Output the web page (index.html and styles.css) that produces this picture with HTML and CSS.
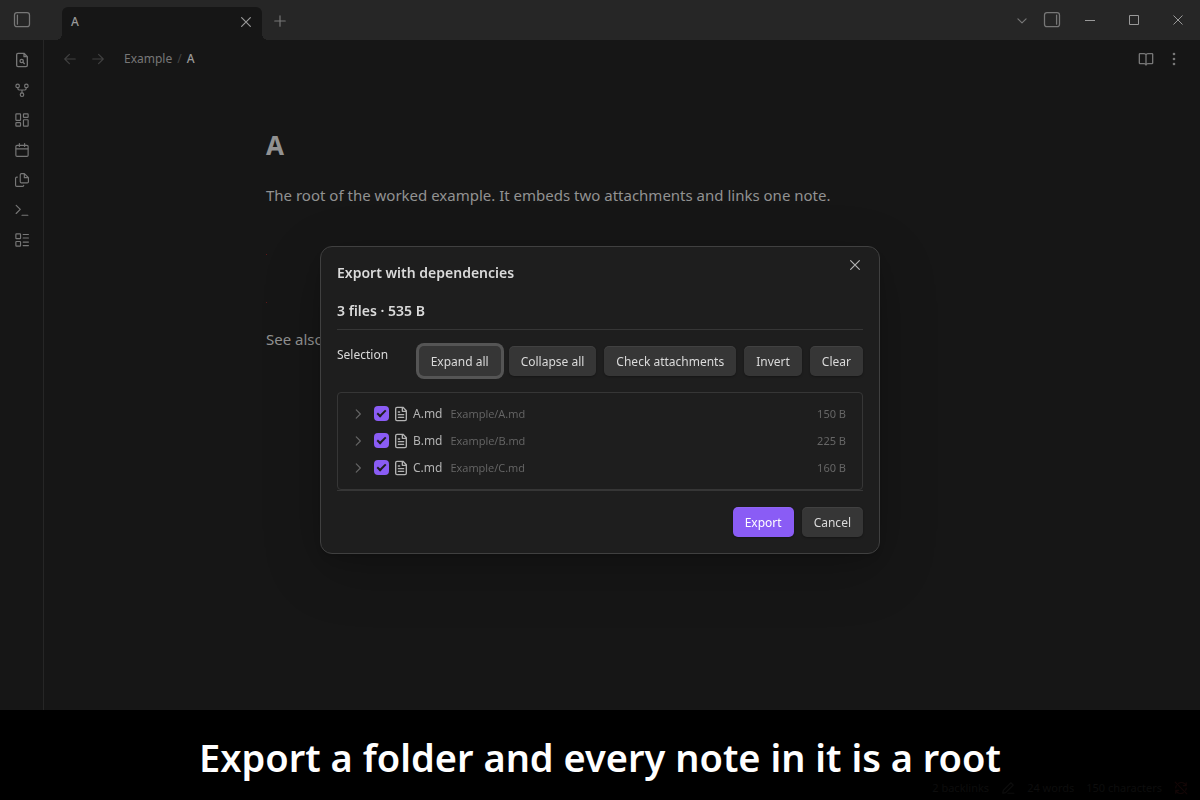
FILE: index.html
```html
<!DOCTYPE html>
<html lang="en">
<head>
<meta charset="utf-8">
<title>A - Export with dependencies</title>
<link rel="stylesheet" href="styles.css">
</head>
<body>
<div class="app">
  <header class="titlebar">
    <button class="icon-btn sidebar-toggle" aria-label="Toggle left sidebar"><svg class="icon icon-l" viewBox="0 0 24 24"><rect x="3" y="3" width="18" height="17" rx="3"/><path d="M6.500 6v11"/></svg></button>
    <div class="tab">
      <span class="tab-title">A</span>
      <button class="icon-btn tab-close" aria-label="Close tab"><svg class="icon" viewBox="0 0 24 24"><path d="M4.500 4.500l15 15M19.500 4.500l-15 15"/></svg></button>
    </div>
    <button class="icon-btn new-tab" aria-label="New tab"><svg class="icon" viewBox="0 0 24 24"><path d="M12 3v18M3 12h18"/></svg></button>
    <div class="window-controls">
      <button class="icon-btn tab-list" aria-label="Tab list"><svg class="icon" viewBox="0 0 24 24"><path d="M5 10l7 7 7-7"/></svg></button>
      <button class="icon-btn right-toggle" aria-label="Toggle right sidebar"><svg class="icon icon-l" viewBox="0 0 24 24"><rect x="3" y="3" width="18" height="17" rx="3"/><path d="M17.500 6v11"/></svg></button>
      <button class="icon-btn win" aria-label="Minimize"><svg class="glyph" viewBox="0 0 10 10"><path d="M0 5.500h10"/></svg></button>
      <button class="icon-btn win" aria-label="Maximize"><svg class="glyph" viewBox="0 0 10 10"><path d="M.5.5h9v9h-9z"/></svg></button>
      <button class="icon-btn win" aria-label="Close"><svg class="glyph" viewBox="0 0 10 10"><path d="M.5.5l9 9M9.500.5l-9 9"/></svg></button>
    </div>
  </header>
  <div class="workspace">
    <nav class="ribbon" aria-label="Ribbon">
      <button class="icon-btn" aria-label="Quick switcher"><svg class="icon icon-m" viewBox="0 0 24 24"><path d="M15 2H6a2 2 0 0 0-2 2v16a2 2 0 0 0 2 2h12a2 2 0 0 0 2-2V7l-5-5zM15 2v5h5"/><circle cx="11.500" cy="13.500" r="2.500"/><path d="M13.500 15.500L15.500 17.500"/></svg></button>
      <button class="icon-btn" aria-label="Graph view"><svg class="icon" viewBox="0 0 24 24"><circle cx="12" cy="20" r="3"/><circle cx="4.500" cy="5" r="3"/><circle cx="19.500" cy="5" r="3"/><path d="M19 8v2a2 2 0 0 1-2 2H7a2 2 0 0 1-2-2V8M12 12v5"/></svg></button>
      <button class="icon-btn" aria-label="Canvas"><svg class="icon" viewBox="0 0 24 24"><rect x="1.500" y="1.500" width="8" height="11" rx="1"/><rect x="14.500" y="1.500" width="8" height="6" rx="1"/><rect x="14.500" y="11.500" width="8" height="11" rx="1"/><rect x="1.500" y="16.500" width="8" height="6" rx="1"/></svg></button>
      <button class="icon-btn" aria-label="Daily note"><svg class="icon" viewBox="0 0 24 24"><rect x="1.500" y="4" width="21" height="19" rx="2"/><path d="M7.500 1v5M16.500 1v5M2 10h20"/></svg></button>
      <button class="icon-btn" aria-label="Templates"><svg class="icon" viewBox="0 0 24 24"><path d="M16 1h-5a2 2 0 0 0-2 2v12a2 2 0 0 0 2 2h10a2 2 0 0 0 2-2V8l-7-7zM16 1v7h7"/><path d="M4 7H3a2 2 0 0 0-2 2v12a2 2 0 0 0 2 2h10a2 2 0 0 0 2-2v0"/></svg></button>
      <button class="icon-btn" aria-label="Command palette"><svg class="icon" viewBox="0 0 24 24"><path d="M2 18l7-7-7-7M12 21h10"/></svg></button>
      <button class="icon-btn" aria-label="Bases"><svg class="icon" viewBox="0 0 24 24"><rect x="1.500" y="1.500" width="8" height="8" rx="1"/><rect x="1.500" y="14.500" width="8" height="8" rx="1"/><path d="M14 2.500h9M14 8.500h9M14 15.500h9M14 21.500h9"/></svg></button>
    </nav>
    <main class="view">
      <div class="view-header">
        <button class="icon-btn nav-arrow" aria-label="Back"><svg class="icon" viewBox="0 0 24 24"><path d="M21 12H4M11 4l-8 8 8 8"/></svg></button>
        <button class="icon-btn nav-arrow" aria-label="Forward"><svg class="icon" viewBox="0 0 24 24"><path d="M3 12h17M13 4l8 8-8 8"/></svg></button>
        <div class="crumbs"><a class="crumb" href="#example">Example</a><span class="slash">/</span><span class="current">A</span></div>
        <button class="icon-btn view-action" aria-label="Reading view"><svg class="icon icon-m" viewBox="0 0 24 24"><path d="M12 6a3 3 0 0 0-3-2H3a1 1 0 0 0-1 1v13a1 1 0 0 0 1 1h6a3 3 0 0 1 3 2 3 3 0 0 1 3-2h6a1 1 0 0 0 1-1V5a1 1 0 0 0-1-1h-6a3 3 0 0 0-3 2zM12 6v15"/></svg></button>
        <button class="icon-btn view-action" aria-label="More options"><svg class="icon icon-m dots" viewBox="0 0 24 24"><circle cx="12" cy="4.500" r="2"/><circle cx="12" cy="12" r="2"/><circle cx="12" cy="19.500" r="2"/></svg></button>
      </div>
      <article class="note">
        <h1 class="note-title">A</h1>
        <p class="note-text">The root of the worked example. It embeds two attachments and links one note.</p>
        <div class="embed"></div>
        <div class="embed"></div>
        <p class="note-text">See also</p>
      </article>
    </main>
  </div>
  <footer class="caption">
    <p class="caption-text">Export a folder and every note in it is a root</p>
    <div class="status">
      <span>2 backlinks</span>
      <svg class="icon" viewBox="0 0 24 24"><path d="M12 21h10M3 21l1-5L17 3l4 4L8 20z"/></svg>
      <span>24 words</span>
      <span>150 characters</span>
      <svg class="icon sync" viewBox="0 0 24 24"><path d="M2 2l20 20M21 8a9 9 0 0 0-13-4M21 3v5h-5M3 16a9 9 0 0 0 13 4M3 21v-5h5M4 8a9 9 0 0 0-1 4M20 16a9 9 0 0 0 1-4"/></svg>
    </div>
  </footer>
</div>

<div class="modal-layer">
  <section class="modal" role="dialog" aria-labelledby="dialog-title">
    <button class="icon-btn modal-close" aria-label="Close dialog"><svg class="icon" viewBox="0 0 24 24"><path d="M4.500 4.500l15 15M19.500 4.500l-15 15"/></svg></button>
    <h2 class="modal-title" id="dialog-title">Export with dependencies</h2>
    <p class="summary">3 files · 535 B</p>
    <div class="selection">
      <span class="selection-label">Selection</span>
      <div class="selection-actions">
        <button class="btn focused">Expand all</button>
        <button class="btn">Collapse all</button>
        <button class="btn">Check attachments</button>
        <button class="btn">Invert</button>
        <button class="btn">Clear</button>
      </div>
    </div>
    <div class="tree-wrap">
      <ul class="tree">
        <li class="row">
          <button class="icon-btn chevron" aria-label="Expand A.md"><svg class="icon" viewBox="0 0 24 24"><path d="M9 5l7 7-7 7"/></svg></button>
          <input class="check" type="checkbox" id="file-a" checked>
          <label class="file" for="file-a"><svg class="icon icon-m" viewBox="0 0 24 24"><path d="M15 2H6a2 2 0 0 0-2 2v16a2 2 0 0 0 2 2h12a2 2 0 0 0 2-2V7l-5-5zM14 2v6h6M8 9h2M8 13h8M8 17h8"/></svg><span class="name">A.md</span><span class="path">Example/A.md</span></label>
          <span class="size">150 B</span>
        </li>
        <li class="row">
          <button class="icon-btn chevron" aria-label="Expand B.md"><svg class="icon" viewBox="0 0 24 24"><path d="M9 5l7 7-7 7"/></svg></button>
          <input class="check" type="checkbox" id="file-b" checked>
          <label class="file" for="file-b"><svg class="icon icon-m" viewBox="0 0 24 24"><path d="M15 2H6a2 2 0 0 0-2 2v16a2 2 0 0 0 2 2h12a2 2 0 0 0 2-2V7l-5-5zM14 2v6h6M8 9h2M8 13h8M8 17h8"/></svg><span class="name">B.md</span><span class="path">Example/B.md</span></label>
          <span class="size">225 B</span>
        </li>
        <li class="row">
          <button class="icon-btn chevron" aria-label="Expand C.md"><svg class="icon" viewBox="0 0 24 24"><path d="M9 5l7 7-7 7"/></svg></button>
          <input class="check" type="checkbox" id="file-c" checked>
          <label class="file" for="file-c"><svg class="icon icon-m" viewBox="0 0 24 24"><path d="M15 2H6a2 2 0 0 0-2 2v16a2 2 0 0 0 2 2h12a2 2 0 0 0 2-2V7l-5-5zM14 2v6h6M8 9h2M8 13h8M8 17h8"/></svg><span class="name">C.md</span><span class="path">Example/C.md</span></label>
          <span class="size">160 B</span>
        </li>
      </ul>
    </div>
    <div class="modal-actions">
      <button class="btn primary">Export</button>
      <button class="btn">Cancel</button>
    </div>
  </section>
</div>
</body>
</html>
```

FILE: styles.css
```css
*, *::before, *::after { box-sizing: border-box; }
body {
  margin: 0;
  background: #161616;
  color: #dadada;
  font-family: "Noto Sans", "Open Sans", sans-serif;
  font-size: 12px;
  line-height: 20px;
}
h1, h2, p, ul { margin: 0; padding: 0; }
.app { display: flex; flex-direction: column; height: 100vh; overflow: hidden; }

.icon-btn {
  display: flex;
  align-items: center;
  justify-content: center;
  flex: none;
  width: 28px;
  height: 28px;
  padding: 0;
  border: 0;
  background: none;
  color: #777;
}
.icon, .glyph { width: 14px; height: 14px; fill: none; stroke: currentColor; stroke-width: 2; stroke-linecap: round; stroke-linejoin: round; flex: none; }
.icon-m { width: 16px; height: 16px; }
.icon-l { width: 20px; height: 20px; stroke-width: 1.5; }
.glyph { width: 10px; height: 10px; stroke-width: 1; stroke-linecap: butt; stroke-linejoin: miter; }

.titlebar { display: flex; align-items: center; height: 40px; background: #262626; flex: none; }
.sidebar-toggle { margin-left: 8px; }
.tab {
  position: relative;
  display: flex;
  align-items: center;
  justify-content: space-between;
  align-self: flex-end;
  width: 200px;
  height: 33px;
  margin-left: 26px;
  padding: 0 2px 3px 9px;
  border-radius: 6px 6px 0 0;
  background: #161616;
}
.tab::before, .tab::after {
  content: "";
  position: absolute;
  bottom: 0;
  width: 6px;
  height: 6px;
}
.tab::before { left: -6px; background: radial-gradient(circle at 0 0, #262626 6px, #161616 6px); }
.tab::after { right: -6px; background: radial-gradient(circle at 100% 0, #262626 6px, #161616 6px); }
.tab-title { color: #999; font-weight: 500; }
.tab-close { color: #999; }
.new-tab { margin-left: 4px; padding-top: 2px; }
.window-controls { display: flex; align-items: center; margin-left: auto; }
.right-toggle { width: 32px; }
.win { width: 44px; color: #999; }

.workspace { display: flex; flex: 1; min-height: 0; }
.ribbon {
  display: flex;
  flex-direction: column;
  align-items: center;
  gap: 2px;
  width: 44px;
  padding-top: 6px;
  border-right: 1px solid #262626;
  flex: none;
}
.view { flex: 1; min-width: 0; }
.view-header { display: flex; align-items: center; height: 38px; padding: 0 12px; }
.nav-arrow { color: #404040; }
.crumbs { display: flex; gap: 5px; margin: 0 auto 0 12px; color: #777; }
.crumb { color: #777; text-decoration: none; }
.slash { color: #444; }
.current { color: #999; font-weight: 500; }
.dots { fill: currentColor; stroke: none; }

.note { max-width: 712px; margin: 0 auto; padding-top: 49px; color: #929292; font-size: 15px; line-height: 24px; }
.note-title { margin-bottom: 20px; font-size: 26px; line-height: 36px; font-weight: 700; }
.note-text { margin-bottom: 47px; }
.embed { width: 1px; height: 1px; margin-bottom: 47px; background: #601818; }
.embed + .note-text { margin-top: -23px; }

.caption { position: relative; display: flex; justify-content: center; height: 90px; background: #000; flex: none; }
.caption-text { padding-top: 20px; color: #fff; font-size: 38px; line-height: 54px; font-weight: 600; white-space: nowrap; }
.status {
  position: absolute;
  right: 12px;
  bottom: 4px;
  display: flex;
  align-items: center;
  gap: 12px;
  color: #0d0d0d;
  font-size: 11px;
  line-height: 16px;
}
.sync { color: #130606; }

.modal-layer { position: fixed; inset: 0; display: flex; align-items: center; justify-content: center; }
.modal {
  position: relative;
  width: 560px;
  max-width: 100%;
  padding: 16px;
  border: 1px solid #404040;
  border-radius: 12px;
  background: #1e1e1e;
  box-shadow: 0 2px 3px rgba(0, 0, 0, .1), 0 8px 20px rgba(0, 0, 0, .1), 0 16px 60px rgba(0, 0, 0, .2);
}
.modal-close { position: absolute; top: 4px; right: 10px; color: #b3b3b3; }
.modal-title { margin-bottom: 18px; font-size: 14px; line-height: 20px; font-weight: 600; }
.summary { padding-bottom: 8px; border-bottom: 1px solid #363636; font-size: 14px; line-height: 20px; font-weight: 600; }
.selection { display: flex; justify-content: space-between; padding: 16px 0; }
.selection-label { line-height: 18px; }
.selection-actions { display: flex; gap: 8px; }
.btn {
  height: 30px;
  padding: 1px 12px 0;
  border: 0;
  border-radius: 5px;
  background: #363636;
  color: #dadada;
  font-family: inherit;
  font-size: 12px;
  box-shadow: 0 1px 2px rgba(0, 0, 0, .3), inset 0 1px 0 rgba(255, 255, 255, .06);
}
.focused { box-shadow: 0 0 0 3px #555; }
.primary { background: #8a5cf5; color: #fff; }

.tree-wrap { border-bottom: 1px solid #363636; }
.tree { padding: 7px 16px 8px 12px; border: 1px solid #363636; border-radius: 4px; list-style: none; }
.row { display: flex; align-items: center; height: 27px; }
.chevron { width: 16px; height: 20px; color: #666; }
.check {
  position: relative;
  appearance: none;
  flex: none;
  width: 15px;
  height: 15px;
  margin: 0 4px 0 8px;
  border-radius: 4px;
  background: #8a5cf5;
}
.check:checked::after {
  content: "";
  position: absolute;
  left: 3px;
  top: 4px;
  width: 9px;
  height: 5px;
  border: solid #1e1e1e;
  border-width: 0 0 2px 2px;
  transform: rotate(-45deg);
}
.file { display: flex; align-items: center; flex: 1; color: #b3b3b3; }
.name { margin-left: 4px; }
.path { margin-left: 8px; color: #666; font-family: "Open Sans", sans-serif; font-size: 11px; }
.size { color: #666; font-size: 11px; }
.modal-actions { display: flex; justify-content: flex-end; gap: 8px; padding-top: 16px; }
```
